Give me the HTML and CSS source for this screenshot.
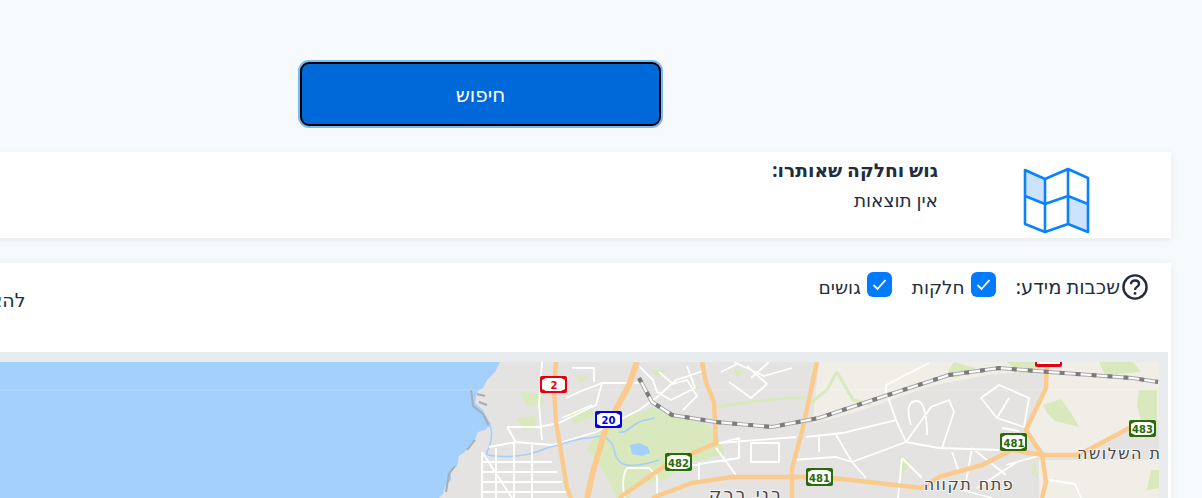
FILE: index.html
```html
<!DOCTYPE html>
<html lang="he" dir="rtl">
<head>
<meta charset="utf-8">
<title>חיפוש גוש וחלקה</title>
<link rel="stylesheet" href="styles.css">
</head>
<body>
<main class="page">
  <div class="actions"><button class="search-btn" type="button">חיפוש</button></div>

  <section class="card result">
    <svg class="map-icon" viewBox="1023 167 67 67" aria-hidden="true">
      <path class="mi-fill" d="M1025 170l20 9v25l-20-9zM1068 197l20 8v27l-20-8z"/>
      <path class="mi-line" d="M1025 170l20 9 23-10 20 9v54l-20-8-23 8-20-8zM1045 179v53M1068 169v55M1025 196l20 8 23-8 20 8"/>
    </svg>
    <div class="result-text">
      <h2 class="result-title">גוש וחלקה שאותרו:</h2>
      <p class="result-value">אין תוצאות</p>
    </div>
  </section>

  <section class="card map-card">
    <div class="toolbar">
      <div class="layers">
        <svg class="help" viewBox="0 0 26 26" aria-hidden="true">
          <circle class="help-ring" cx="13" cy="13" r="11.6"/>
          <path class="help-ring" d="M9 10.2c0-2.4 1.8-3.7 4-3.7s4 1.3 4 3.4c0 3-4 3-4 6"/>
          <circle class="help-dot" cx="13" cy="19.4" r="1.4"/>
        </svg>
        <span class="layers-label">שכבות מידע:</span>
        <label class="check"><span class="box"><svg viewBox="0 0 25 25" aria-hidden="true"><path d="M6.5 13l4 4 8-9"/></svg></span>חלקות</label>
        <label class="check"><span class="box"><svg viewBox="0 0 25 25" aria-hidden="true"><path d="M6.5 13l4 4 8-9"/></svg></span>גושים</label>
      </div>
      <div class="show-label">להציג</div>
    </div>
    <div class="map-wrap">
      <svg class="map" viewBox="0 362 1160 136" preserveAspectRatio="xMaxYMin slice" role="img" aria-label="מפה">
        <rect class="land" x="0" y="362" width="1160" height="136"/>
        <g class="soft">
          <path class="land-far" d="M1160 362H1050l-3 26-20 42 22 26 30 0 40-22 41-14z"/>
          <path class="land-far" d="M820 362h215l13 8-60 5-60 12-70 25-45 12z"/>
          <path class="land-far" d="M1040 460h120v38h-120z"/>
          <path class="green" d="M600 428l28-12 32-10 20 10 28 8 12 14 6 16-22 6-22 4-12 14-24 6-14 8-8 20-14-30-12-20-10-12z"/>
          <path class="green" d="M520 392l22 2 4 10-18 2zM518 418l18-2 2 12-14 2zM1008 362l28 0 8 8-22 4zM955 362l22 6-20 10-8-6zM1140 390h18v44l-14-8-6-20zM1044 405l18-6 10 14 8 14-24-6-8-8zM1100 362h34l8 10-36 3zM568 412l24-4 4 8-20 8zM900 455l12 6-8 14zM1036 458l2 20-6-6zM1160 470v18l-12 2 4-20zM650 370l16 0-6 8zM690 385l10 2-4 8zM735 368l10 4-8 6zM575 375l15 2-8 6z"/>
          <path class="green-line" d="M717 407l35-5 35-4 20 0M838 372l8 14 8 14 18 4M838 372l-10 18-18 14"/>
          <path class="park-water" d="M631 445l9-2 9 4 2 6-8 3-10-2z"/>
          <path class="water" d="M0 362H501L496 372 488 380 484 388 478 392 476 403 484 410 487 416 492 424 486 430 479 432 476 440 470 446 466 452 460 456 458 466 452 470 452 480 446 486 444 494 440 498H0z"/>
          <path class="coast" d="M472 390l2 16 10 8 6 12M478 394l8 2M480 402l8 3M456 466l-6 8-3 18M476 440l-8 10"/>
          <path class="river" d="M490 424c5 8 2 18 0 24-4 6-4 8 8 8 18 2 36-2 50-8 16-4 30-10 42-10 14-4 20 0 24 8 2 6 2 14 10 18 10 4 24 0 36-4M620 432c6 2 10-4 14-6 6-6 14-6 22-8"/>
          <path class="street" d="M508 427h32l20-4 37-18 6-22h42M508 427l9 15M490 447l27-5 36 3 44-13 43-22 17-12 20-18 30-10M543 362l-3 43 3 35M567 398l13-6 23-9M563 418l30-13M573 368h22v14M483 452v46M497 448v50M515 442v56M533 445v53M483 462h70M483 472h75M483 482h80M483 492h85M483 452l30 46M628 468c-6 10-4 22-2 30M628 468h22l8 8v22M693 465l47-7v-20l-20 5M720 443l77-6M717 448l20 27M700 462v20M752 443h28v19h-28zM640 366l14 14 4 12 14 8 24-12-8-22M660 372l14 12 14-4 10 16-14 14M735 362l30 14 28-8M722 372l16-8M730 382l22 16 16-14-20-18M770 362l-18 16M807 437l36-4 54-13 10 22 33 6 60 2M897 420l-10-28v-7l43-22M907 442l25-35 18-7 5 12-12 36M912 425c-4-14-4-24 6-24 8 0 10 20 10 34M907 442l-54 20M837 435l16 27 14 16M820 435v17M793 460l44-3 16 5M982 398l18-13 30 13-5 29-27-9zM1010 398l-12 20M1003 428l17 3M973 448l-6 34M953 452l7 20M973 448l34 27M903 458l20 20M903 458l-4 40M1007 465l36-10M1018 462l-40 26M1050 480l26 4 6 14M963 490l30 8"/>
        </g>
        <path class="tile-seam" d="M0 390H1160"/>
        <g class="soft">
          <path class="road" d="M557 362l-2 26 2 34 11 66 4 10"/>
          <path class="road road-wide" d="M638 362l-8 23-23 43-12 40-7 30"/>
          <path class="road" d="M703 362l4 20 8 20 2 41-50 22-47 33"/>
          <path class="road" d="M818 362l-15 70-10 36v30"/>
          <path class="road" d="M653 498l40-15 40-6h74l26 1 90 10 17-11 43-12 30-15 30 5 4 27-4 16"/>
          <path class="road" d="M1048 362l-1 26-20 42 16 25h34l16-7 37-20 15-6"/>
          <path class="rail-case" d="M640 378l13 24 20 13 44 7 56 5 47-9 63-21 67-22 50-7 50 4 83 6 26 4"/>
          <path class="rail-base" d="M640 378l13 24 20 13 44 7 56 5 47-9 63-21 67-22 50-7 50 4 83 6 26 4"/>
          <path class="rail-dash" d="M640 378l13 24 20 13 44 7 56 5 47-9 63-21 67-22 50-7 50 4 83 6 26 4"/>
        </g>

        <g class="shield red"><rect x="541" y="376" width="27" height="17" rx="2"/><path d="M543 380l4-2h15l4 2v9l-4 2h-15l-4-2z"/><text x="555" y="389">2</text></g>
        <g class="shield blue"><rect x="596" y="411" width="27" height="17" rx="2"/><path d="M598 415l4-2h15l4 2v9l-4 2h-15l-4-2z"/><text x="609.5" y="424">20</text></g>
        <g class="shield green-s"><rect x="666" y="453" width="27" height="18" rx="2"/><path d="M668 457l4-2h15l4 2v10l-4 2h-15l-4-2z"/><text x="679.500" y="466.500">482</text></g>
        <g class="shield green-s"><rect x="807" y="468" width="27" height="18" rx="2"/><path d="M809 472l4-2h15l4 2v10l-4 2h-15l-4-2z"/><text x="820.500" y="481.500">481</text></g>
        <g class="shield green-s"><rect x="1001" y="433" width="27" height="18" rx="2"/><path d="M1003 437l4-2h15l4 2v10l-4 2h-15l-4-2z"/><text x="1015" y="446.500">481</text></g>
        <g class="shield green-s"><rect x="1130" y="420" width="27" height="17" rx="2"/><path d="M1132 424l4-2h15l4 2v9l-4 2h-15l-4-2z"/><text x="1143.500" y="433">483</text></g>
        <g class="shield red"><rect x="1036" y="352" width="27" height="15" rx="2"/><path d="M1038 352h23v12h-23z"/></g>

        <text class="place place-lg" x="747" y="501">בני ברק</text>
        <text class="place" x="970" y="490">פתח תקווה</text>
        <text class="place place-edge" x="1078" y="459">גבעת השלושה</text>
      </svg>
    </div>
  </section>
</main>
</body>
</html>
```
FILE: styles.css
```css
* { box-sizing: border-box; }
html, body { margin: 0; height: 498px; overflow: hidden; }
body {
  background: #f7fafd;
  color: #212d3d;
  font-family: "Noto Sans", "DejaVu Sans", sans-serif;
  font-size: 19px;
}
.page {
  margin-right: 31px;
  margin-left: -100px;
  padding-top: 60px;
  display: flex;
  flex-direction: column;
}
.actions { display: flex; margin-right: 508px; }
.search-btn {
  width: 361px;
  height: 64px;
  margin: 2px;
  background: #0069d9;
  color: #fff;
  font: inherit;
  font-size: 20px;
  border: 2px solid #000;
  border-radius: 9px;
  box-shadow: 0 0 0 2px #7fb9f3;
}
.card {
  background: #fff;
  box-shadow: 0 2px 8px rgba(40, 60, 90, .09);
}
.result {
  margin-top: 24px;
  height: 86px;
  display: flex;
  padding-right: 81px;
}
.map-icon { width: 67px; height: 67px; margin-top: 15px; flex: none; }
.mi-fill { fill: #cce3ff; }
.mi-line { fill: none; stroke: #0a81ff; stroke-width: 2.6; stroke-linejoin: round; }
.result-text { margin-right: 85px; padding-top: 3px; }
.result-title { margin: 0; font-size: 18.700px; font-weight: 700; line-height: 30px; }
.result-value { margin: 0; font-size: 18.500px; line-height: 29px; }
.map-card { margin-top: 25px; height: 300px; }
.toolbar {
  height: 89px;
  display: flex;
  justify-content: space-between;
  padding: 9px 23px 0 79px;
}
.layers { display: flex; align-items: flex-start; height: 30px; }
.help { width: 26px; height: 26px; margin-top: 2px; flex: none; }
.help-ring { fill: none; stroke: #212d3d; stroke-width: 2.4; }
.help-dot { fill: #212d3d; }
.layers-label { line-height: 30px; font-size: 19.500px; margin-left: 20px; margin-right: 2px; }
.check { display: flex; align-items: flex-start; line-height: 30px; font-size: 18.500px; margin-left: 20px; }
.box {
  width: 25px;
  height: 25px;
  border-radius: 6px;
  background: #007bff;
  margin-left: 6px;
  display: block;
}
.box svg { display: block; width: 25px; height: 25px; }
.box path { fill: none; stroke: #fff; stroke-width: 1.8; }
.show-label { line-height: 30px; padding-top: 13px; }
.map-wrap {
  margin-right: 3px;
  padding: 10px 9px 0 0;
  background: #e9ecef;
  height: 211px;
  overflow: hidden;
}
.map { display: block; width: 1160px; height: 136px; margin-right: auto; margin-left: 100px; overflow: hidden; }
.soft { filter: blur(.45px); }
.land { fill: #e4e3e2; }
.land-far { fill: #f0eee6; }
.green { fill: #d9e8bd; }
.green-line { fill: none; stroke: #d9e8bd; stroke-width: 3; }
.water { fill: #a3d0fd; }
.park-water { fill: #a3d0fd; }
.coast { fill: none; stroke: #a9adb2; stroke-width: 2; }
.tile-seam { stroke: #fff; stroke-opacity: .25; stroke-width: 1; }
.river { fill: none; stroke: #a3d0fd; stroke-width: 1.6; }
.street { fill: none; stroke: #fff; stroke-width: 1.8; stroke-linejoin: round; }
.road { fill: none; stroke: #fbcb8e; stroke-width: 4.500; stroke-linejoin: round; }
.road-wide { stroke-width: 6; }
.rail-case { fill: none; stroke: #a8a8a8; stroke-width: 4; }
.rail-base { fill: none; stroke: #fff; stroke-width: 2.200; }
.rail-dash { fill: none; stroke: #7c7c7c; stroke-width: 4; stroke-dasharray: 5 11; }
.shield path { fill: #fff; }
.shield text {
  font-family: "DejaVu Sans", sans-serif;
  font-size: 10px;
  font-weight: 700;
  text-anchor: middle;
  direction: ltr;
}
.red rect { fill: #e3000f; }
.red text { fill: #e3000f; }
.blue rect { fill: #0000e6; }
.blue text { fill: #0000e6; }
.green-s rect { fill: #2a6a08; }
.green-s text { fill: #2a6a08; }
.place {
  font-family: "DejaVu Sans", sans-serif;
  font-size: 16px;
  letter-spacing: 1.500px;
  fill: #474747;
  stroke: #fff;
  stroke-width: 2px;
  stroke-opacity: .7;
  paint-order: stroke;
  text-anchor: middle;
  direction: rtl;
}
.place-lg { font-size: 18px; letter-spacing: 2px; }
.place-edge { text-anchor: end; }
```
